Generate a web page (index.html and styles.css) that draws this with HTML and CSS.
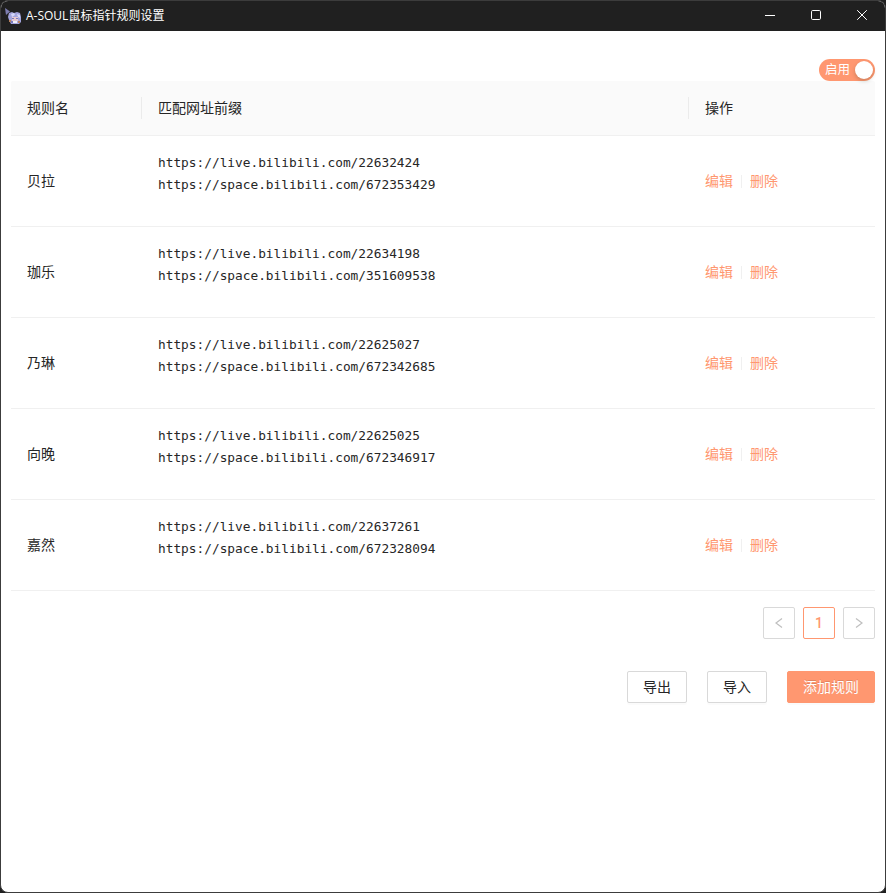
FILE: index.html
```html
<!DOCTYPE html>
<html lang="zh-CN">
<head>
<meta charset="utf-8">
<title>A-SOUL鼠标指针规则设置</title>
<link rel="stylesheet" href="styles.css">
</head>
<body>
<div class="window">
  <header class="titlebar">
    <svg class="app-icon" width="18" height="18" viewBox="0 0 18 18">
      <path d="M0 1l5 3.5L1 8z" fill="#7d7db0"/>
      <path d="M4 6l3-1 2 1 3-1 3 1 1 4v5l-2 2H6l-2-4-1-3z" fill="#a3a4dc"/>
      <path d="M6 7l3-1 1 2-3 2zM12 7l3 1v3l-2-1z" fill="#d5d7fa"/>
      <path d="M7 10h6v4H7z" fill="#e6c8cf"/>
      <path d="M7 11h2v1H7zM11 11h2v1h-2zM6 14h2v2H6z" fill="#7779bd"/>
      <path d="M8 14h4v2H8z" fill="#eeeefa"/>
      <path d="M4 13h2v2H4zM13 14h2v2h-2z" fill="#b7805f"/>
    </svg>
    <h1 class="title">A-SOUL鼠标指针规则设置</h1>
    <div class="controls">
      <svg width="46" height="30" viewBox="0 0 46 30"><path d="M18 14.5h10"/></svg>
      <svg width="46" height="30" viewBox="0 0 46 30"><rect x="18.5" y="9.5" width="9" height="9" rx="1.2"/></svg>
      <svg width="46" height="30" viewBox="0 0 46 30"><path d="M18.2 9.2l9.6 9.6M27.8 9.2l-9.6 9.6"/></svg>
    </div>
  </header>
  <main class="content">
    <div class="toolbar"><div class="switch"><span>启用</span><i class="knob"></i></div></div>
    <table class="rules">
      <colgroup><col class="c-name"><col class="c-url"><col class="c-ops"></colgroup>
      <thead><tr><th><div>规则名</div></th><th><div>匹配网址前缀</div></th><th><div>操作</div></th></tr></thead>
      <tbody>
        <tr><td>贝拉</td><td><pre>https://live.bilibili.com/22632424
https://space.bilibili.com/672353429</pre></td><td><div class="ops"><a>编辑</a><i></i><a>删除</a></div></td></tr>
        <tr><td>珈乐</td><td><pre>https://live.bilibili.com/22634198
https://space.bilibili.com/351609538</pre></td><td><div class="ops"><a>编辑</a><i></i><a>删除</a></div></td></tr>
        <tr><td>乃琳</td><td><pre>https://live.bilibili.com/22625027
https://space.bilibili.com/672342685</pre></td><td><div class="ops"><a>编辑</a><i></i><a>删除</a></div></td></tr>
        <tr><td>向晚</td><td><pre>https://live.bilibili.com/22625025
https://space.bilibili.com/672346917</pre></td><td><div class="ops"><a>编辑</a><i></i><a>删除</a></div></td></tr>
        <tr><td>嘉然</td><td><pre>https://live.bilibili.com/22637261
https://space.bilibili.com/672328094</pre></td><td><div class="ops"><a>编辑</a><i></i><a>删除</a></div></td></tr>
      </tbody>
    </table>
    <nav class="pager">
      <span class="page"><svg width="10" height="12" viewBox="0 0 10 12"><path d="M8 1.5L2 6l6 4.5"/></svg></span>
      <span class="page current">1</span>
      <span class="page"><svg width="10" height="12" viewBox="0 0 10 12"><path d="M2 1.5L8 6l-6 4.5"/></svg></span>
    </nav>
    <div class="actions">
      <button>导出</button>
      <button>导入</button>
      <button class="primary">添加规则</button>
    </div>
  </main>
</div>
</body>
</html>
```
FILE: styles.css
```css
* { box-sizing: border-box; }
body {
  margin: 0;
  height: 893px;
  background: #202020;
  color: #262626;
  font: 14px/22px "Liberation Sans", "Noto Sans CJK SC", sans-serif;
}
.window {
  height: 893px;
  border: 1px solid #3c3c3c;
  border-radius: 8px;
  background: #fff;
  overflow: hidden;
}
.titlebar {
  display: flex;
  align-items: center;
  height: 30px;
  padding-left: 4px;
  background: #202020;
  color: #fff;
}
.app-icon { margin-right: 3px; }
.title {
  flex: 1;
  margin: 0;
  font: 12px/28px "Open Sans", "Noto Sans CJK SC", sans-serif;
}
.controls { display: flex; }
.controls svg { fill: none; stroke: #fff; stroke-width: 1; }
.content { padding: 28px 10px 0; }
.toolbar { display: flex; justify-content: flex-end; }
.switch {
  display: flex;
  align-items: center;
  justify-content: space-between;
  width: 56px;
  height: 22px;
  padding: 0 2px 0 6px;
  border-radius: 11px;
  background: #ff9770;
  color: #fff;
  font-size: 12.5px;
}
.knob {
  width: 18px;
  height: 18px;
  border-radius: 50%;
  background: #fff;
  box-shadow: 0 2px 4px rgba(0, 35, 11, .2);
}
.rules {
  width: 864px;
  table-layout: fixed;
  border-collapse: separate;
  border-spacing: 0;
}
.c-name { width: 131px; }
.c-url { width: 547px; }
.c-ops { width: 186px; }
th {
  height: 55px;
  padding: 0 0 1px;
  background: #fafafa;
  border-bottom: 1px solid #f0f0f0;
  font-weight: 400;
  text-align: left;
}
th:first-child { border-top-left-radius: 2px; }
th:last-child { border-top-right-radius: 2px; }
th div { padding-left: 16px; border-right: 1px solid #ebebeb; }
th:last-child div { border-right: 0; }
td {
  height: 91px;
  padding: 0 16px;
  border-bottom: 1px solid #f0f0f0;
}
pre {
  margin: 0 0 14px;
  font: 12.8px/22px "DejaVu Sans Mono", monospace;
}
.ops { display: flex; align-items: center; color: #ff9770; }
.ops i { width: 1px; height: 13px; margin: 0 8px; background: #f0f0f0; }
.pager {
  display: flex;
  justify-content: flex-end;
  gap: 8px;
  margin-top: 16px;
}
.page {
  display: flex;
  align-items: center;
  justify-content: center;
  width: 32px;
  height: 32px;
  border: 1px solid #d9d9d9;
  border-radius: 2px;
}
.page svg { fill: none; stroke: #bfbfbf; stroke-width: 1.2; }
.current { border-color: #ff9770; color: #ff9770; font-family: Roboto, sans-serif; font-weight: 500; }
.actions {
  display: flex;
  justify-content: flex-end;
  gap: 20px;
  margin-top: 32px;
}
button {
  height: 32px;
  padding: 0 15px;
  border: 1px solid #d9d9d9;
  border-radius: 2px;
  background: #fff;
  color: #262626;
  font: inherit;
  box-shadow: 0 2px 0 rgba(0, 0, 0, .015);
}
.primary {
  border-color: #ff9770;
  background: #ff9770;
  color: #fff;
  text-shadow: 0 -1px 0 rgba(0, 0, 0, .12);
}
```
